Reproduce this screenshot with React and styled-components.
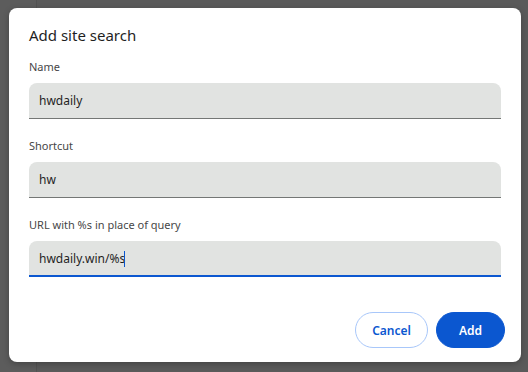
import React from "react";
import styled, { createGlobalStyle } from "styled-components";

const Global = createGlobalStyle`
  html, body {
    margin: 0;
    padding: 0;
    width: 528px;
    height: 372px;
    overflow: hidden;
    background: linear-gradient(to right, #5c5c5c 0, #5c5c5c 36px, #525252 36px, #525252 37px, #5a5a5a 37px);
    font-family: "Noto Sans", "Open Sans", sans-serif;
  }
`;

const Backdrop = styled.div`
  width: 528px;
  height: 372px;
  padding: 8px 0 0 9px;
  box-sizing: border-box;
`;

const Dialog = styled.div`
  width: 512px;
  height: 354px;
  box-sizing: border-box;
  background: #ffffff;
  border-radius: 8px;
  padding: 16px 20px 14px 20px;
  display: flex;
  flex-direction: column;
  box-shadow: 0 2px 6px rgba(0, 0, 0, 0.25);
`;

const Title = styled.h1`
  margin: 0 0 13px 0;
  font-size: 15px;
  line-height: 22px;
  font-weight: 400;
  color: #1f1f1f;
`;

const Field = styled.div`
  display: flex;
  flex-direction: column;
  margin-bottom: 19px;
`;

const Label = styled.label`
  font-size: 11px;
  line-height: 16px;
  color: #474747;
  margin-bottom: 8px;
`;

const InputBox = styled.div`
  height: 36px;
  box-sizing: border-box;
  background: #e1e3e1;
  border-radius: 8px 8px 0 0;
  border-bottom: ${(p) => (p.$focused ? "2px solid #0b57d0" : "1px solid #747775")};
  display: flex;
  align-items: center;
  padding: ${(p) => (p.$focused ? "1px 10px 0" : "0 10px")};
  font-size: 12px;
  color: #1f1f1f;
`;

const Caret = styled.span`
  display: inline-block;
  width: 1px;
  height: 16px;
  background: #0b57d0;
  margin-left: -1px;
`;

const Footer = styled.div`
  margin-top: auto;
  display: flex;
  justify-content: flex-end;
  gap: 8px;
  margin-right: -4px;
`;

const Button = styled.button`
  height: 36px;
  box-sizing: border-box;
  border-radius: 18px;
  font-family: "Noto Sans", "Open Sans", sans-serif;
  font-size: 12px;
  font-weight: 600;
  padding: 0 ${(p) => p.$pad}px;
  border: 1px solid ${(p) => (p.$primary ? "#0b57d0" : "#a8c7fa")};
  background: ${(p) => (p.$primary ? "#0b57d0" : "#ffffff")};
  color: ${(p) => (p.$primary ? "#ffffff" : "#0b57d0")};
`;

export default function App() {
  return (
    <Backdrop>
      <Global />
      <Dialog>
        <Title>Add site search</Title>
        <Field>
          <Label>Name</Label>
          <InputBox>hwdaily</InputBox>
        </Field>
        <Field>
          <Label>Shortcut</Label>
          <InputBox>hw</InputBox>
        </Field>
        <Field>
          <Label>URL with %s in place of query</Label>
          <InputBox $focused>
            hwdaily.win/%s
            <Caret />
          </InputBox>
        </Field>
        <Footer>
          <Button $pad={16}>Cancel</Button>
          <Button $primary $pad={22}>
            Add
          </Button>
        </Footer>
      </Dialog>
    </Backdrop>
  );
}
